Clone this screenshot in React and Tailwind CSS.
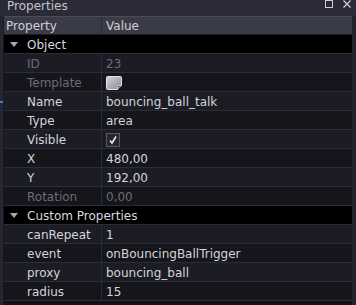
import React from 'react';

const objectRows = [
  { name: 'ID', value: '23', disabled: true },
  { name: 'Template', kind: 'template', disabled: true },
  { name: 'Name', value: 'bouncing_ball_talk' },
  { name: 'Type', value: 'area' },
  { name: 'Visible', kind: 'check' },
  { name: 'X', value: '480,00' },
  { name: 'Y', value: '192,00' },
  { name: 'Rotation', value: '0,00', disabled: true },
];

const customRows = [
  { name: 'canRepeat', value: '1' },
  { name: 'event', value: 'onBouncingBallTrigger' },
  { name: 'proxy', value: 'bouncing_ball' },
  { name: 'radius', value: '15' },
];

const TemplateIcon = () => (
  <svg width="16" height="14" viewBox="0 0 16 14">
    <defs>
      <linearGradient id="tg" x1="0" y1="0" x2="1" y2="1">
        <stop offset="0" stopColor="#d2d2da" />
        <stop offset="1" stopColor="#8a8a96" />
      </linearGradient>
    </defs>
    <path d="M0.5 1.5 Q0.5 0.5 1.5 0.5 H14.5 Q15.5 0.5 15.5 1.5 V9.5 L11.5 13.5 H1.5 Q0.5 13.5 0.5 12.5 Z" fill="url(#tg)" stroke="#e2e2e8" strokeWidth="1" />
    <path d="M11.5 13.5 V10.5 Q11.5 9.5 12.5 9.5 H15.5" fill="#6a6a76" stroke="#c8c8d0" strokeWidth="1" />
  </svg>
);

const CheckBox = () => (
  <div className="w-[14px] h-[14px] border border-[#55566a] bg-[#262632] flex items-center justify-center">
    <svg width="10" height="10" viewBox="0 0 10 10">
      <path d="M2 5.5 L4 8 L8 1.5" fill="none" stroke="#e8e8ee" strokeWidth="1.6" />
    </svg>
  </div>
);

const Row = ({ row, i }) => {
  const text = row.disabled ? 'text-[#6c6c78]' : 'text-[#d4d4da]';
  const bg = i % 2 === 0 ? 'bg-[#1c1c25]' : 'bg-[#15151c]';
  return (
    <div className={`flex h-[19px] border-b border-[#2c2c38] ${bg}`}>
      <div className={`w-[98px] shrink-0 pl-[23px] pt-[1px] border-r border-[#2c2c38] flex items-center ${text}`}>
        {row.name}
      </div>
      <div className={`flex-1 pl-[4px] pt-[1px] flex items-center ${text}`}>
        {row.kind === 'template' ? <TemplateIcon /> : row.kind === 'check' ? <CheckBox /> : row.value}
      </div>
    </div>
  );
};

const Group = ({ title }) => (
  <div className="flex h-[19px] pt-[1px] border-b border-[#2c2c38] bg-black items-center text-[#d8d8de]">
    <svg width="8" height="5" viewBox="0 0 8 5" className="ml-[6px] mr-[9px]">
      <path d="M0 0 H8 L4 5 Z" fill="#a8a8b2" />
    </svg>
    {title}
  </div>
);

export default function App() {
  return (
    <div
      className="w-[356px] h-[305px] bg-[#262630] overflow-hidden flex flex-col text-[12px] leading-[14px]"
      style={{ fontFamily: '"DejaVu Sans", sans-serif' }}
    >
      <div className="h-[16px] shrink-0 bg-[#2a2b36] flex items-start justify-between">
        <span className="pl-[7px] -mt-[1px] text-[#c4c4cc]">Properties</span>
        <div className="flex items-start gap-[10px] pr-[5px]">
          <div className="w-[8px] h-[8px] border border-[#cfcfd6]" />
          <svg width="8" height="8" viewBox="0 0 8 8">
            <path d="M0.5 0.5 L7.5 7.5 M7.5 0.5 L0.5 7.5" stroke="#cfcfd6" strokeWidth="1.2" />
          </svg>
        </div>
      </div>
      <div className="flex flex-1">
        <div className="w-[4px] shrink-0 border-r border-[#1a1a22] relative">
          <div className="absolute left-0 top-[85px] w-[3px] h-[2px] bg-[#3d7ee0]" />
        </div>
        <div className="w-[348px] shrink-0 flex flex-col bg-[#15151c]">
          <div className="flex h-[19px] bg-[#3a3b47] border-t border-[#4a4b58] border-b border-b-[#1e1e26] text-[#d0d0d6]">
            <div className="w-[98px] shrink-0 pl-[2px] border-r border-[#2a2b36] flex items-center">Property</div>
            <div className="flex-1 pl-[4px] flex items-center">Value</div>
          </div>
          <Group title="Object" />
          {objectRows.map((r, i) => (
            <Row key={r.name} row={r} i={i} />
          ))}
          <Group title="Custom Properties" />
          {customRows.map((r, i) => (
            <Row key={r.name} row={r} i={i} />
          ))}
          <div className="flex-1 bg-[#111116]" />
        </div>
        <div className="flex-1 bg-[#24242d]" />
      </div>
    </div>
  );
}
